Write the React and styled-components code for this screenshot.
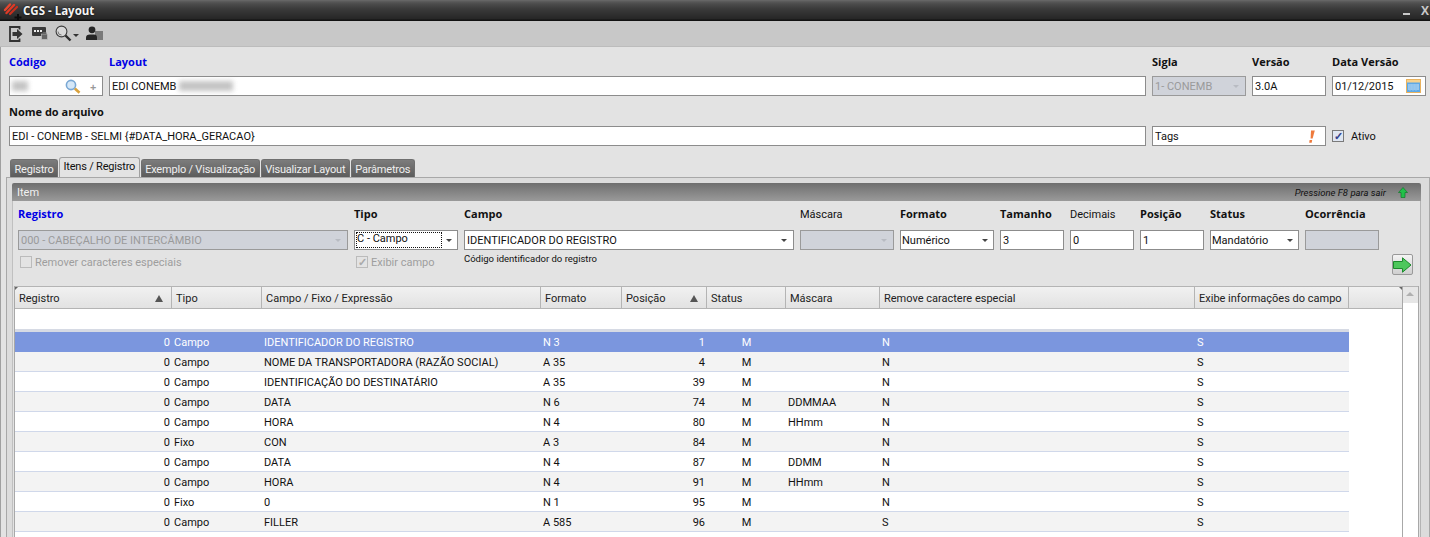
import styled, { createGlobalStyle } from "styled-components";

const GlobalStyle = createGlobalStyle`
  html, body {
    margin: 0;
    padding: 0;
    background: #e3e3e3;
  }
  * {
    box-sizing: border-box;
  }
`;

const font = `Roboto, "Liberation Sans", sans-serif`;
const boldFont = `"Open Sans", "Noto Sans", sans-serif`;

const gridColumns = "157px 90px 279px 81px 85px 79px 94px 315px 154px";

const rows = [
  ["0", "Campo", "IDENTIFICADOR DO REGISTRO", "N 3", "1", "M", "", "N", "S"],
  ["0", "Campo", "NOME DA TRANSPORTADORA (RAZÃO SOCIAL)", "A 35", "4", "M", "", "N", "S"],
  ["0", "Campo", "IDENTIFICAÇÃO DO DESTINATÁRIO", "A 35", "39", "M", "", "N", "S"],
  ["0", "Campo", "DATA", "N 6", "74", "M", "DDMMAA", "N", "S"],
  ["0", "Campo", "HORA", "N 4", "80", "M", "HHmm", "N", "S"],
  ["0", "Fixo", "CON", "A 3", "84", "M", "", "N", "S"],
  ["0", "Campo", "DATA", "N 4", "87", "M", "DDMM", "N", "S"],
  ["0", "Campo", "HORA", "N 4", "91", "M", "HHmm", "N", "S"],
  ["0", "Fixo", "0", "N 1", "95", "M", "", "N", "S"],
  ["0", "Campo", "FILLER", "A 585", "96", "M", "", "S", "S"],
];

const headers = [
  { label: "Registro", sorted: true },
  { label: "Tipo" },
  { label: "Campo / Fixo / Expressão" },
  { label: "Formato" },
  { label: "Posição", sorted: true },
  { label: "Status" },
  { label: "Máscara" },
  { label: "Remove caractere especial" },
  { label: "Exibe informações do campo" },
];

const LogoIcon = () => (
  <svg width="20" height="18" viewBox="0 0 20 18">
    <path d="M2 8 L7 2.5" stroke="#e8452e" strokeWidth="2.4" strokeLinecap="round" />
    <path d="M3.5 11 L11 3" stroke="#e03a26" strokeWidth="2.4" strokeLinecap="round" />
    <path d="M7 12 L14 5" stroke="#c9301e" strokeWidth="2.2" strokeLinecap="round" />
    <path d="M14 12 h2 v2.5 h2.5 v2 h-2.5 v1.5 h-2 v-1.5 h-2.5 v-2 h2.5 Z" fill="#0c0c0c" />
  </svg>
);

const ExitIcon = () => (
  <svg width="14" height="16" viewBox="0 0 14 16">
    <path d="M10.5 3.5 V1 H1 V15 H10.5 V12.5" fill="none" stroke="#333" strokeWidth="1.8" />
    <path d="M3.5 6 H8 V3 L13.5 8 L8 13 V10 H3.5 Z" fill="#333" />
  </svg>
);

const KeypadIcon = () => (
  <svg width="16" height="13" viewBox="0 0 16 13">
    <rect x="0" y="0" width="14" height="9" rx="1" fill="#3a3a3a" />
    <rect x="2" y="3" width="2" height="2" fill="#eee" />
    <rect x="5" y="3" width="2" height="2" fill="#eee" />
    <rect x="8" y="3" width="2" height="2" fill="#eee" />
    <rect x="9.5" y="7" width="6" height="5.5" fill="#666" stroke="#c8c8c8" strokeWidth="0.6" />
    <path d="M11 7 V5.5 H14 V7" fill="none" stroke="#666" />
  </svg>
);

const SearchIcon = () => (
  <svg width="17" height="17" viewBox="0 0 17 17">
    <circle cx="6.5" cy="6.5" r="5.4" fill="#d8d8d8" stroke="#3c3c3c" strokeWidth="1.1" />
    <path d="M3 6.5 A3.5 3.5 0 0 0 6.5 10" fill="none" stroke="#777" />
    <path d="M10.5 10.5 L15.5 15.5" stroke="#2e2e2e" strokeWidth="2.4" />
  </svg>
);

const UserIcon = () => (
  <svg width="17" height="15" viewBox="0 0 17 15">
    <rect x="9" y="5" width="8" height="9" fill="#7a7a7a" />
    <circle cx="6" cy="3.8" r="3.4" fill="#262626" />
    <path d="M0 14 V11.5 Q0 8.5 4 8.5 H8 Q11 8.5 11 11.5 V14 Z" fill="#262626" />
  </svg>
);

const LensIcon = () => (
  <svg width="16" height="15" viewBox="0 0 16 15">
    <circle cx="6" cy="6" r="4.6" fill="#d6e8f8" stroke="#7aa8d4" strokeWidth="1.6" />
    <path d="M9.8 9.5 L14.5 13.8" stroke="#d9a13c" strokeWidth="2.6" />
  </svg>
);

const CalendarIcon = () => (
  <svg width="15" height="14" viewBox="0 0 15 14">
    <rect x="0.5" y="0.5" width="14" height="13" fill="#5ea9e6" stroke="#e9b25e" />
    <rect x="1" y="1" width="13" height="2.5" fill="#f6d28e" />
    <path d="M2 6 H13 M2 8 H13 M2 10 H13" stroke="#cfe5f8" />
    <path d="M4 5 V12 M7 5 V12 M10 5 V12" stroke="#8cc2ee" />
  </svg>
);

const WarningIcon = () => (
  <svg width="6" height="13" viewBox="0 0 6 13">
    <path d="M2 0.5 H5.8 L3.6 8.5 H1.6 Z" fill="#ee7a3c" />
    <path d="M0.6 10 H3.2 L2.7 12.8 H0.2 Z" fill="#ee7a3c" />
  </svg>
);

const UpArrowIcon = () => (
  <svg width="10" height="11" viewBox="0 0 10 11">
    <path d="M5 0.5 L9.5 5.5 H7 V10.5 H3 V5.5 H0.5 Z" fill="#22c04a" stroke="#0f7a2a" strokeWidth="0.7" />
  </svg>
);

const RightArrowIcon = () => (
  <svg width="19" height="16" viewBox="0 0 19 16">
    <path d="M0.5 4.5 H9.5 V0.8 L18 8 L9.5 15.2 V11.5 H0.5 Z" fill="#4ec75c" stroke="#1c8a2c" />
  </svg>
);

const Caret = ({ disabled }) => <CaretMark $disabled={disabled} />;

const App = () => (
  <>
    <GlobalStyle />
    <Window>
      <TitleBar>
        <TitleLeft>
          <LogoIcon />
          <TitleText>CGS - Layout</TitleText>
        </TitleLeft>
        <WindowButtons>
          <MinimizeButton />
          <CloseButton>X</CloseButton>
        </WindowButtons>
      </TitleBar>

      <Toolbar>
        <ExitIcon />
        <KeypadIcon />
        <SearchGroup>
          <SearchIcon />
          <ToolbarCaret />
        </SearchGroup>
        <UserIcon />
      </Toolbar>

      <Body>
        <FormRow>
          <Field $w={94}>
            <Label $blue>Código</Label>
            <Input>
              <Blurred $w={16} />
              <LensSlot><LensIcon /></LensSlot>
              <Plus>+</Plus>
            </Input>
          </Field>
          <Field $grow>
            <Label $blue>Layout</Label>
            <Input>
              EDI CONEMB <Blurred $w={54} $gap />
            </Input>
          </Field>
          <Field $w={94}>
            <Label>Sigla</Label>
            <Input $disabled>
              <InputText>1- CONEMB</InputText>
              <Caret disabled />
            </Input>
          </Field>
          <Field $w={74}>
            <Label>Versão</Label>
            <Input>3.0A</Input>
          </Field>
          <Field $w={94}>
            <Label>Data Versão</Label>
            <Input>
              <InputText>01/12/2015</InputText>
              <CalendarSlot><CalendarIcon /></CalendarSlot>
            </Input>
          </Field>
        </FormRow>

        <FormRow $second>
          <Field $grow>
            <Label>Nome do arquivo</Label>
            <Input>EDI - CONEMB - SELMI {"{#DATA_HORA_GERACAO}"}</Input>
          </Field>
          <Field $w={174}>
            <Input>
              <InputText>Tags</InputText>
              <WarningSlot><WarningIcon /></WarningSlot>
            </Input>
          </Field>
          <AtivoBox $w={94}>
            <CheckBox $checked>✓</CheckBox>
            <CheckLabel>Ativo</CheckLabel>
          </AtivoBox>
        </FormRow>

        <TabStrip>
          <Tab>Registro</Tab>
          <Tab $active>Itens / Registro</Tab>
          <Tab>Exemplo / Visualização</Tab>
          <Tab>Visualizar Layout</Tab>
          <Tab>Parâmetros</Tab>
        </TabStrip>

        <TabPanel>
          <PanelHeader>
            <span>Item</span>
            <PanelHint>
              <HintText>Pressione F8 para sair</HintText>
              <UpArrowIcon />
            </PanelHint>
          </PanelHeader>

          <PanelBody>
            <ItemForm>
              <ItemRow>
                <Field $w={330}>
                  <Label $blue>Registro</Label>
                  <Input $disabled>
                    <InputText>000 - CABEÇALHO DE INTERCÂMBIO</InputText>
                    <Caret disabled />
                  </Input>
                  <CheckRow $muted>
                    <CheckBox $disabled />
                    <CheckLabel>Remover caracteres especiais</CheckLabel>
                  </CheckRow>
                </Field>
                <Field $w={104}>
                  <Label>Tipo</Label>
                  <Input $tight>
                    <FocusText>C - Campo</FocusText>
                    <Caret />
                  </Input>
                  <CheckRow $muted>
                    <CheckBox $disabled>✓</CheckBox>
                    <CheckLabel>Exibir campo</CheckLabel>
                  </CheckRow>
                </Field>
                <Field $w={330}>
                  <Label>Campo</Label>
                  <Input>
                    <InputText>IDENTIFICADOR DO REGISTRO</InputText>
                    <Caret />
                  </Input>
                  <Hint>Código identificador do registro</Hint>
                </Field>
                <Field $w={94}>
                  <Label $light>Máscara</Label>
                  <Input $disabled>
                    <InputText />
                    <Caret disabled />
                  </Input>
                </Field>
                <Field $w={94}>
                  <Label>Formato</Label>
                  <Input $tight>
                    <InputText>Numérico</InputText>
                    <Caret />
                  </Input>
                </Field>
                <Field $w={64}>
                  <Label>Tamanho</Label>
                  <Input>3</Input>
                </Field>
                <Field $w={64}>
                  <Label $light>Decimais</Label>
                  <Input>0</Input>
                </Field>
                <Field $w={64}>
                  <Label>Posição</Label>
                  <Input>1</Input>
                </Field>
                <Field $w={89}>
                  <Label>Status</Label>
                  <Input $tight>
                    <InputText>Mandatório</InputText>
                    <Caret />
                  </Input>
                </Field>
                <Field $w={74}>
                  <Label>Ocorrência</Label>
                  <Input $disabled />
                </Field>
              </ItemRow>
              <ActionRow>
                <ArrowButton><RightArrowIcon /></ArrowButton>
              </ActionRow>
            </ItemForm>

            <GridFrame>
              <GridMain>
                <HeaderRow>
                  {headers.map(h => (
                    <HeaderCell key={h.label}>
                      <span>{h.label}</span>
                      {h.sorted && <SortMark />}
                    </HeaderCell>
                  ))}
                  <HeaderFiller />
                </HeaderRow>
                <FilterRow />
                <GridTopLine />
                {rows.map((row, i) => (
                  <DataRow key={i} $selected={i === 0} $stripe={i % 2 === 1}>
                    <Cell $right>{row[0]}</Cell>
                    <Cell>{row[1]}</Cell>
                    <Cell>{row[2]}</Cell>
                    <Cell>{row[3]}</Cell>
                    <Cell $right>{row[4]}</Cell>
                    <Cell $center>{row[5]}</Cell>
                    <Cell>{row[6]}</Cell>
                    <Cell>{row[7]}</Cell>
                    <Cell>{row[8]}</Cell>
                  </DataRow>
                ))}
              </GridMain>
              <ScrollBar>
                <ScrollUp />
              </ScrollBar>
            </GridFrame>
          </PanelBody>
        </TabPanel>
      </Body>
    </Window>
  </>
);

const Window = styled.div`
  width: 1430px;
  height: 537px;
  overflow: hidden;
  display: flex;
  flex-direction: column;
  font-family: ${font};
  font-size: 11px;
  color: #111;
  background: #e3e3e3;
`;

const TitleBar = styled.div`
  height: 21px;
  flex: none;
  display: flex;
  align-items: center;
  justify-content: space-between;
  padding: 0 1px 0 3px;
  background: linear-gradient(#6a6a6a 0, #565656 2px, #4b4b4b 4px, #3a3a3a 9px, #262626 19px, #111 20px);
`;

const TitleLeft = styled.div`
  display: flex;
  align-items: center;
`;

const TitleText = styled.span`
  font-family: ${boldFont};
  font-size: 11.5px;
  font-weight: 700;
  color: #f4f4f4;
  text-shadow: 0 0 2px #000;
`;

const WindowButtons = styled.div`
  display: flex;
  align-items: center;
  gap: 11px;
`;

const MinimizeButton = styled.span`
  width: 7px;
  height: 2px;
  margin-top: 7px;
  background: #c8c8c8;
`;

const CloseButton = styled.span`
  font-family: ${boldFont};
  font-size: 12px;
  font-weight: 700;
  color: #c8c8c8;
`;

const Toolbar = styled.div`
  height: 26px;
  flex: none;
  display: flex;
  align-items: center;
  gap: 7px;
  padding-left: 9px;
  background: #c8c8c8;
  border-bottom: 1px solid #bcbcbc;

  > svg:first-child {
    margin-right: 2px;
  }
`;

const SearchGroup = styled.div`
  display: flex;
  align-items: center;
  gap: 1px;
`;

const ToolbarCaret = styled.span`
  width: 0;
  height: 0;
  margin-top: 3px;
  border-left: 3px solid transparent;
  border-right: 3px solid transparent;
  border-top: 3px solid #333;
`;

const Body = styled.div`
  flex: 1;
  min-height: 0;
  padding: 6px 0 0 5px;
  border-left: 1px solid #a0a0a0;
`;

const FormRow = styled.div`
  display: flex;
  gap: 6px;
  padding: 0 4px 0 3px;
  margin-top: ${({ $second }) => ($second ? "7px" : "0")};
  align-items: flex-end;
`;

const Field = styled.div`
  display: flex;
  flex-direction: column;
  flex: ${({ $grow }) => ($grow ? "1" : "none")};
  width: ${({ $w }) => ($w ? `${$w}px` : "auto")};
  min-width: 0;
`;

const Label = styled.label`
  height: 23px;
  padding-top: ${({ $light }) => ($light ? "1px" : "0")};
  line-height: 18px;
  font-family: ${({ $light }) => ($light ? font : boldFont)};
  font-size: 11px;
  font-weight: ${({ $light }) => ($light ? 400 : 700)};
  color: ${({ $blue }) => ($blue ? "#0000e6" : "#111")};
  white-space: nowrap;
`;

const Input = styled.div`
  height: 20px;
  display: flex;
  align-items: center;
  padding: 0 ${({ $tight }) => ($tight ? "1px" : "2px")};
  border: 1px solid ${({ $disabled }) => ($disabled ? "#9a9a9a" : "#8c8c8c")};
  background: ${({ $disabled }) => ($disabled ? "#d0d3da" : "#fff")};
  color: ${({ $disabled }) => ($disabled ? "#9a9a9a" : "#111")};
  white-space: nowrap;
  overflow: hidden;
`;

const InputText = styled.span`
  flex: 1;
  min-width: 0;
`;

const Blurred = styled.span`
  display: inline-block;
  width: ${({ $w }) => $w}px;
  height: 10px;
  margin-left: ${({ $gap }) => ($gap ? "3px" : "0")};
  background: #c4c4c4;
  filter: blur(2.5px);
`;

const LensSlot = styled.span`
  margin-left: auto;
  display: flex;
`;

const CalendarSlot = styled.span`
  display: flex;
  margin-right: 2px;
`;

const WarningSlot = styled.span`
  display: flex;
  margin-right: 8px;
`;

const Plus = styled.span`
  width: 10px;
  margin-left: 9px;
  font-family: ${boldFont};
  font-size: 11px;
  font-weight: 700;
  color: #999;
`;

const CaretMark = styled.span`
  flex: none;
  width: 0;
  height: 0;
  margin: 1px 4px 0 4px;
  border-left: 3px solid transparent;
  border-right: 3px solid transparent;
  border-top: 3px solid ${({ $disabled }) => ($disabled ? "#b8bbc2" : "#444")};
`;

const CheckRow = styled.div`
  display: flex;
  align-items: center;
  gap: 3px;
  height: 14px;
  margin-top: 5px;
  margin-left: 2px;
  color: ${({ $muted }) => ($muted ? "#9e9e9e" : "#111")};
`;

const CheckBox = styled.span`
  flex: none;
  width: 12px;
  height: 12px;
  display: flex;
  align-items: center;
  justify-content: center;
  font-size: 11px;
  font-weight: 700;
  line-height: 1;
  border: 1px solid ${({ $disabled }) => ($disabled ? "#bbb" : "#7a7a7a")};
  background: ${({ $disabled }) => ($disabled ? "#e3e3e3" : "#dfe6f2")};
  color: ${({ $disabled }) => ($disabled ? "#aaa" : "#33408c")};
`;

const CheckLabel = styled.span`
  white-space: nowrap;
`;

const AtivoBox = styled.div`
  width: ${({ $w }) => $w}px;
  height: 20px;
  display: flex;
  align-items: center;
  gap: 7px;
`;

const TabStrip = styled.div`
  display: flex;
  align-items: flex-end;
  height: 19px;
  margin-top: 12px;
  padding-left: 4px;
  gap: 1px;
`;

const Tab = styled.div`
  height: ${({ $active }) => ($active ? "20px" : "18px")};
  padding: ${({ $active }) => ($active ? "0" : "1px")} 3.5px 0;
  line-height: 17px;
  letter-spacing: -0.2px;
  white-space: nowrap;
  border-radius: 3px 3px 0 0;
  border: 1px solid ${({ $active }) => ($active ? "#a0a0a0" : "#6f6f6f")};
  border-bottom: none;
  background: ${({ $active }) =>
    $active ? "#e3e3e3" : "linear-gradient(#7c7c7c, #5c5c5c)"};
  color: ${({ $active }) => ($active ? "#111" : "#f0f0f0")};
`;

const TabPanel = styled.div`
  padding: 5px 8px 0 5px;
  border: 1px solid #a8a8a8;
  border-bottom: none;
  height: 400px;
  background: #dcdcdc;
`;

const PanelHeader = styled.div`
  height: 18px;
  display: flex;
  align-items: center;
  justify-content: space-between;
  padding: 0 13px 0 5px;
  border-radius: 2px 2px 0 0;
  background: linear-gradient(#6e6e6e, #9a9a9a);
  color: #f2f2f2;
`;

const PanelHint = styled.div`
  display: flex;
  align-items: center;
  gap: 12px;
`;

const HintText = styled.span`
  font-size: 9.5px;
  font-style: italic;
  color: #111;
`;

const PanelBody = styled.div`
  height: 400px;
  background: #e3e3e3;
  border-left: 1px solid #c0c0c0;
  border-right: 1px solid #b4b4b4;
`;

const ItemForm = styled.div`
  height: 85px;
  padding: 6px 0 0 5px;
`;

const ItemRow = styled.div`
  display: flex;
  gap: 6px;

  label {
    line-height: 14px;
  }
`;

const Hint = styled.div`
  margin-top: 3px;
  font-size: 9.5px;
  height: 14px;
  white-space: nowrap;
`;

const ActionRow = styled.div`
  display: flex;
  justify-content: flex-end;
  margin: -15px 7px 0 0;
`;

const ArrowButton = styled.div`
  width: 21px;
  height: 21px;
  display: flex;
  align-items: center;
  justify-content: center;
  border: 1px solid #999;
  border-radius: 2px;
  background: linear-gradient(#f4f4f4, #cfcfcf);
`;

const GridFrame = styled.div`
  display: flex;
  margin-left: 1px;
  width: 1405px;
  height: 260px;
  border-left: 1px solid #a8a8a8;
  border-right: 1px solid #a8a8a8;
  background: #fff;
`;

const GridMain = styled.div`
  flex: 1;
  min-width: 0;
  border-right: 1px solid #a8a8a8;
`;

const HeaderRow = styled.div`
  display: grid;
  grid-template-columns: ${gridColumns} 1fr;
  position: relative;
  height: 23px;
  border-top: 1px solid #b4b4b4;
  border-bottom: 1px solid #b4b4b4;
  background: linear-gradient(#f1f1f1, #e2e2e2);
  color: #222;

  &::before,
  &::after {
    content: "";
    position: absolute;
    top: 0;
    border-top: 3px solid #666;
  }

  &::before {
    left: 0;
    border-right: 3px solid transparent;
  }

  &::after {
    right: 0;
    border-left: 3px solid transparent;
  }
`;

const HeaderCell = styled.div`
  display: flex;
  align-items: center;
  justify-content: space-between;
  padding: 1px 8px 0 4px;
  border-right: 1px solid #b4b4b4;
  white-space: nowrap;
`;

const HeaderFiller = styled.div``;

const SortMark = styled.span`
  width: 0;
  height: 0;
  border-left: 4px solid transparent;
  border-right: 4px solid transparent;
  border-bottom: 7px solid #555;
`;

const FilterRow = styled.div`
  height: 20px;
`;

const GridTopLine = styled.div`
  width: 1334px;
  height: 3px;
  background: #d6dae4;
`;

const DataRow = styled.div`
  display: grid;
  grid-template-columns: ${gridColumns};
  width: 1334px;
  height: 20px;
  align-items: center;
  border-bottom: 1px solid ${({ $selected }) => ($selected ? "#7b96de" : "#d0d8ea")};
  background: ${({ $selected, $stripe }) =>
    $selected ? "#7b96de" : $stripe ? "#f3f3f3" : "#fff"};
  color: ${({ $selected }) => ($selected ? "#fff" : "#111")};
`;

const Cell = styled.div`
  padding: 1px 2px 0;
  white-space: nowrap;
  text-align: ${({ $right, $center }) =>
    $right ? "right" : $center ? "center" : "left"};
`;

const ScrollBar = styled.div`
  width: 15px;
  flex: none;
  background: #fff;
`;

const ScrollUp = styled.div`
  height: 17px;
  position: relative;
  background: #e6e6e6;
  border-top: 1px solid #b4b4b4;

  &::after {
    content: "";
    position: absolute;
    left: 3px;
    top: 5px;
    border-left: 4px solid transparent;
    border-right: 4px solid transparent;
    border-bottom: 4px solid #b0b0b0;
  }
`;

const FocusText = styled.span`
  flex: 1;
  height: 16px;
  line-height: 14px;
  outline: 1px dotted #111;
  outline-offset: -1px;
  padding-left: 1px;
`;

export default App;
